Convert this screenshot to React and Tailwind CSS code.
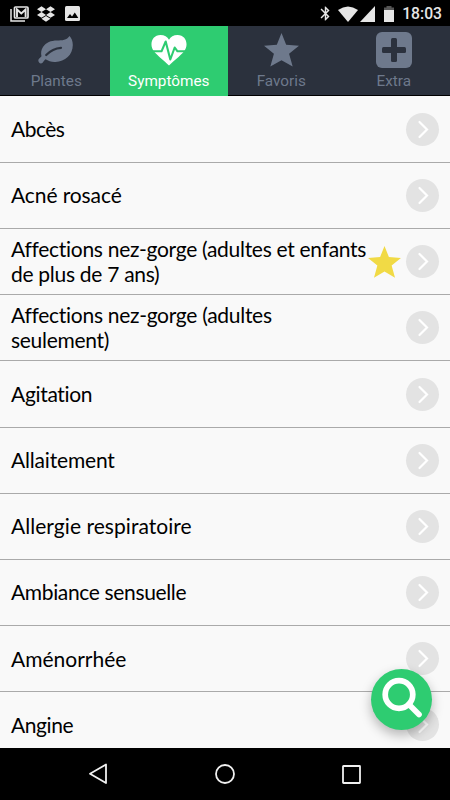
import React from "react";
import { MdBluetooth } from "react-icons/md";
import { FaDropbox } from "react-icons/fa";

const symptoms = [
  { name: "Abcès", spacing: "tracking-[-0.5px]" },
  { name: "Acné rosacé", spacing: "tracking-[-0.1px]" },
  {
    name: "Affections nez-gorge (adultes et enfants de plus de 7 ans)",
    spacing: "tracking-[-0.29px]",
    favorite: true,
  },
  { name: "Affections nez-gorge (adultes seulement)", spacing: "tracking-[-0.28px]" },
  { name: "Agitation", spacing: "tracking-[-0.33px]" },
  { name: "Allaitement", spacing: "tracking-[-0.17px]" },
  { name: "Allergie respiratoire", spacing: "tracking-[0.05px]" },
  { name: "Ambiance sensuelle", spacing: "tracking-[-0.35px]" },
  { name: "Aménorrhée", spacing: "tracking-[0px]" },
  { name: "Angine", spacing: "tracking-[-0.4px]" },
];

function StarIcon({ className }) {
  return (
    <svg viewBox="0 0 36 35" className={className} fill="currentColor">
      <path d="M18 0 22.8 12 36 13 25.8 21.3 29.5 34.6 18 28 6.5 34.6 10.2 21.3 0 13 13.2 12Z" />
    </svg>
  );
}

function LeafIcon() {
  return (
    <svg viewBox="0 0 36 28" className="h-7 w-9" fill="none" strokeLinecap="round">
      <path
        d="M31.5 0C33.5 2 34.8 5 34.8 9C34.8 19 27 25.5 17.5 26C13.5 26.3 10.5 24.8 7.5 23.3C6 24 5.2 27.5 3 27.5C1.5 27.5 .3 25.8 .3 24.5C.3 23 2.5 21.5 3.5 20.3C2.8 17 3 14 5 11C8 6.5 13 4.5 19 4.5C24 4.5 29 4 31.5 0Z"
        fill="currentColor"
      />
      <path d="M8.2 19C12.5 14.5 16 12.2 23 11.8" stroke="#2b313d" strokeWidth="2.2" />
    </svg>
  );
}

function HeartPulseIcon() {
  return (
    <svg viewBox="0 0 36 31" className="h-[31px] w-9">
      <path
        d="M18 30.5C14 26.5 7 21.2 3 16.5C-2 10 .5 0 9.5 0C13.4 0 16.5 2 18 4.8C19.5 2 22.6 0 26.5 0C35.5 0 38 10 33 16.5C29 21.2 22 26.5 18 30.5Z"
        fill="#fff"
      />
      <path
        d="M0 16.3H10.5L14.7 6.5 19.3 24.5 23.7 12.5 26.5 16.3H36"
        fill="none"
        stroke="#2ecc71"
        strokeWidth="2.1"
        strokeLinejoin="round"
      />
    </svg>
  );
}

function PlusBoxIcon() {
  return (
    <svg viewBox="0 0 36 36" className="size-9">
      <rect width="36" height="36" rx="6" fill="#6e798c" />
      <rect x="15" y="6" width="6" height="24" rx="1.5" fill="#2b313d" />
      <rect x="6" y="15" width="24" height="6" rx="1.5" fill="#2b313d" />
    </svg>
  );
}

function StatusBar() {
  return (
    <div className="flex h-[26px] shrink-0 items-center bg-black pt-px text-[#e6e6e6]">
      <svg viewBox="0 0 19 16" className="ml-[10px] h-4 w-[19px]" fill="none" stroke="currentColor">
        <path d="M1 3V15H15" strokeWidth="1.5" />
        <rect x="4.5" y="1" width="13.5" height="11" rx="1" strokeWidth="1.7" />
        <path d="M7 11V3.5L11.3 7.5 15.6 3.5V11" strokeWidth="1.9" />
      </svg>
      <FaDropbox className="ml-[8px] size-[18px]" />
      <svg viewBox="0 0 15 15" className="ml-[10px] size-[15px]">
        <rect width="15" height="15" rx="1.5" fill="currentColor" />
        <path d="M2 12 5 8 7 10.5 9.8 6.5 13.3 12Z" fill="#000" />
      </svg>
      <div className="flex-1" />
      <MdBluetooth className="size-[17px]" />
      <svg viewBox="0 0 20 16" className="ml-[4px] h-4 w-5" fill="currentColor">
        <path d="M0 4Q10-3 20 4L10 16Z" />
      </svg>
      <svg viewBox="0 0 15 16" className="ml-[2px] h-4 w-[15px]" fill="currentColor">
        <path d="M15 0V16H0Z" />
      </svg>
      <svg viewBox="0 0 10 16" className="ml-[9px] h-4 w-[10px]" fill="currentColor">
        <path d="M2.5 0H7.5V1.5H10V4H0V1.5H2.5Z" fill="#555" />
        <path d="M0 4H10V16H0Z" />
      </svg>
      <span className="ml-[8px] mr-[8px] pt-px font-['Roboto',sans-serif] text-[15.7px] font-medium leading-none">
        18:03
      </span>
    </div>
  );
}

function Tab({ label, active, children }) {
  return (
    <div
      className={`flex flex-col items-center ${
        active ? "-mx-[3px] -mb-px bg-[#2ecc71] text-white" : "text-[#6e798c]"
      }`}
    >
      <div className="flex h-[45px] items-center justify-center pt-[3px]">{children}</div>
      <span className="font-['Roboto',sans-serif] text-[15.3px] leading-5">{label}</span>
    </div>
  );
}

function SymptomRow({ name, spacing, favorite }) {
  return (
    <li className="flex h-[66.2px] shrink-0 items-center border-b border-[#aaa] pr-[11px] pl-[11px]">
      <span
        className={`shrink-0 pb-[1.4px] text-[21px] leading-[25px] text-black ${spacing} ${
          favorite ? "w-[357px]" : "w-[340px]"
        }`}
      >
        {name}
      </span>
      {favorite && <StarIcon className="h-8 w-[33px] shrink-0 text-[#f1da45]" />}
      <span className="ml-auto flex size-[33px] shrink-0 items-center justify-center rounded-full bg-[#e3e3e3]">
        <svg viewBox="0 0 33 33" className="size-[33px]" fill="none" stroke="#fff" strokeWidth="2.2">
          <path d="M13.5 9 21 16.5 13.5 24" strokeLinecap="round" />
        </svg>
      </span>
    </li>
  );
}

export default function App() {
  return (
    <div className="relative flex h-[800px] w-[450px] flex-col overflow-hidden bg-[#f9f9f9] font-['Lato',sans-serif]">
      <StatusBar />

      {/* Onglets */}
      <nav className="grid h-[70px] shrink-0 grid-cols-4 border-b border-black bg-[#2b313d]">
        <Tab label="Plantes">
          <LeafIcon />
        </Tab>
        <Tab label="Symptômes" active>
          <HeartPulseIcon />
        </Tab>
        <Tab label="Favoris">
          <StarIcon className="h-[34px] w-[35px]" />
        </Tab>
        <Tab label="Extra">
          <PlusBoxIcon />
        </Tab>
      </nav>

      {/* Liste des symptômes */}
      <ul className="flex min-h-0 flex-1 flex-col overflow-hidden pt-[0.7px]">
        {symptoms.map((symptom) => (
          <SymptomRow key={symptom.name} {...symptom} />
        ))}
      </ul>

      {/* Barre de navigation */}
      <div className="flex h-[52px] shrink-0 items-center justify-between bg-black px-[89px]">
        <svg viewBox="0 0 18 22" className="h-[22px] w-[18px]" fill="none" stroke="#f0f0f0" strokeWidth="1.8">
          <path d="M17 1.5V20L1 10.7Z" strokeLinejoin="round" />
        </svg>
        <svg viewBox="0 0 20 20" className="size-5" fill="none" stroke="#f0f0f0" strokeWidth="1.8">
          <circle cx="10" cy="10" r="9" />
        </svg>
        <svg viewBox="0 0 19 19" className="size-[19px]" fill="none" stroke="#f0f0f0" strokeWidth="1.8">
          <rect x="1" y="1" width="17" height="17" rx="0.5" />
        </svg>
      </div>

      <button className="absolute top-[669px] left-[371px] size-[61px] rounded-full bg-[#2ecc71] shadow-[0_5px_12px_rgba(0,0,0,0.28)]">
        <svg viewBox="0 0 61 61" className="size-[61px]" fill="none" stroke="#fff">
          <circle cx="28" cy="25.5" r="13.8" strokeWidth="5.7" />
          <path d="M38 35.5 48 45.5" strokeWidth="5.7" strokeLinecap="round" />
        </svg>
      </button>
    </div>
  );
}
